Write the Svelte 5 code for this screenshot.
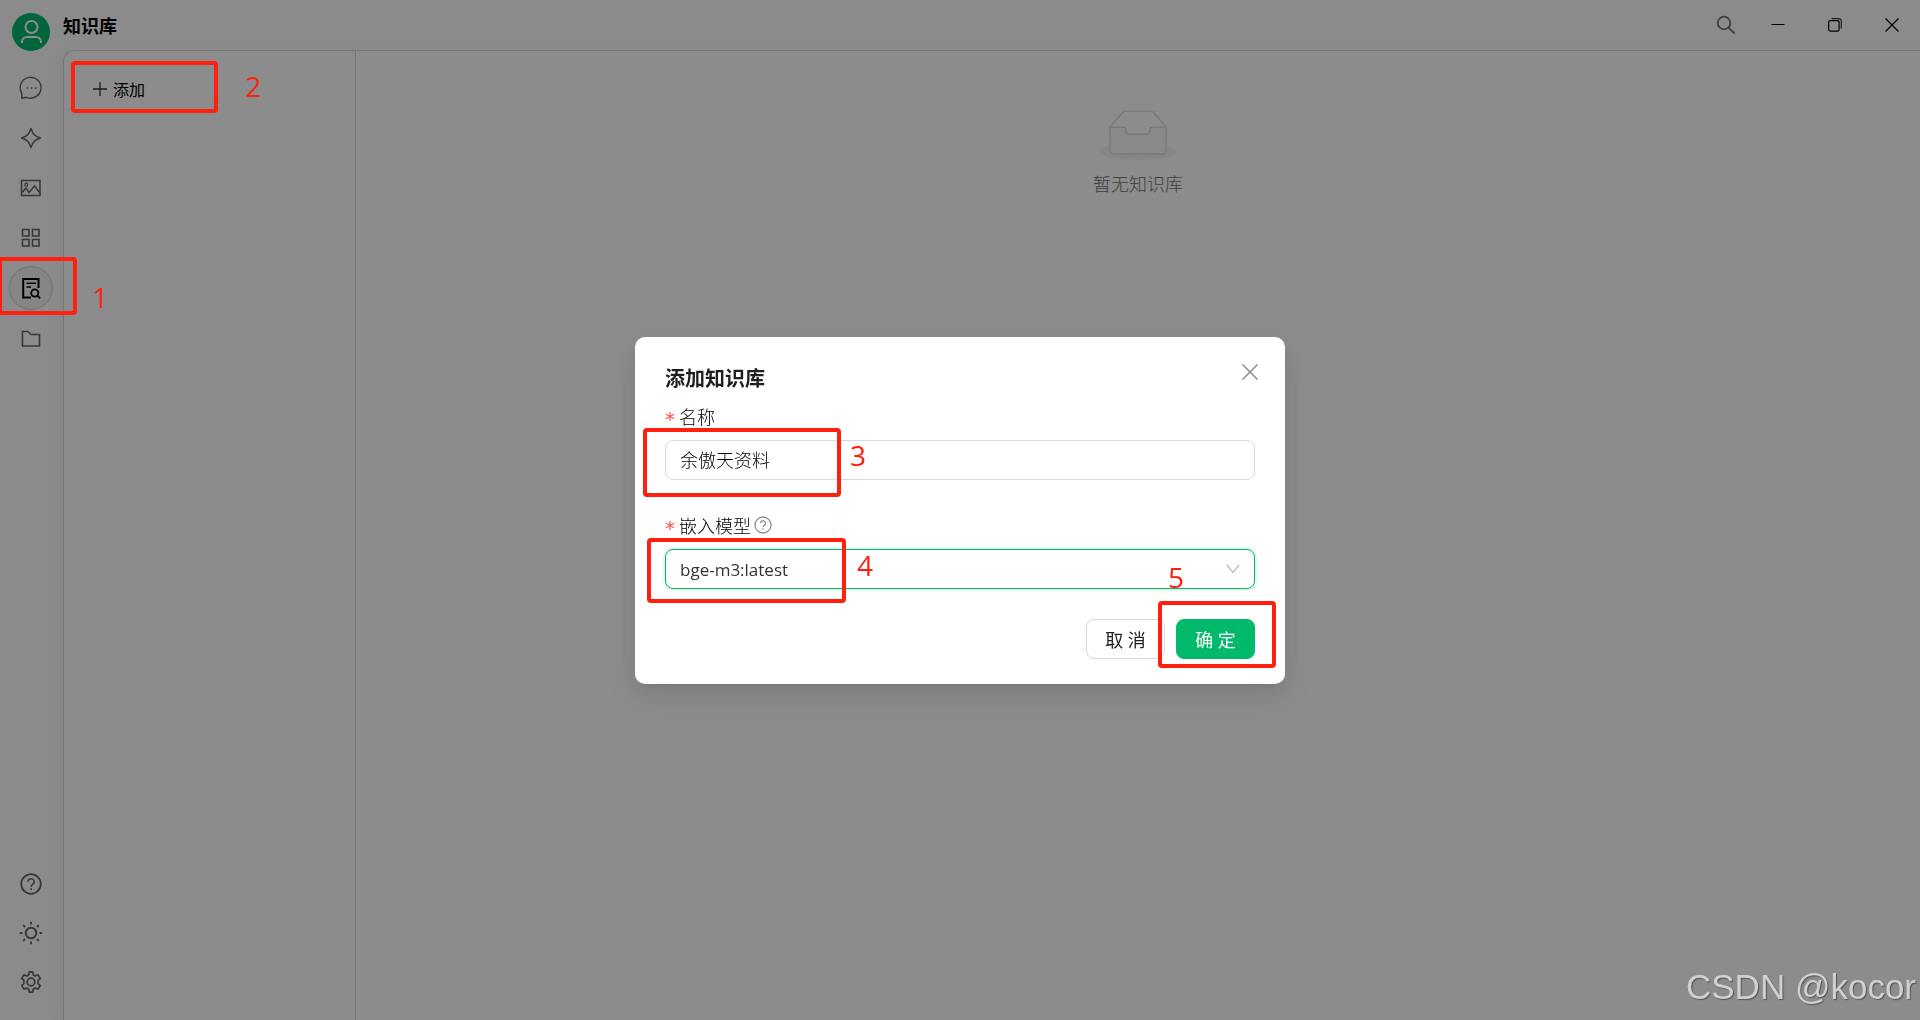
<script>
  let name = $state('余傲天资料');
  let model = $state('bge-m3:latest');
</script>

<div class="app">
  <aside class="sidebar">
    <button class="avatar" aria-label="用户">
      <svg width="38" height="38" viewBox="0 0 38 38" fill="none" stroke="#fff" stroke-width="2">
        <circle cx="19.500" cy="14" r="6" />
        <path d="M10 30v-1.500a5 5 0 0 1 5-4.500h9a5 5 0 0 1 5 4.500V30" />
      </svg>
    </button>
    <nav class="nav" aria-label="主导航">
      <button class="item" aria-label="对话">
        <svg viewBox="0 0 24 24">
          <path d="M2.800 22.300V17.300A10.400 10.400 0 1 1 7.500 21.300z" stroke-width="1.400" stroke-linejoin="round" />
          <path d="M7.500 12h1.600M11.700 12h1.600M15.900 12h1.600" stroke-width="1.500" />
        </svg>
      </button>
      <button class="item" aria-label="助手">
        <svg viewBox="0 0 24 24">
          <path d="M12 2.500c1.800 5.600 3.900 7.700 9.500 9.500-5.600 1.800-7.700 3.900-9.500 9.500-1.800-5.600-3.900-7.700-9.500-9.500 5.600-1.800 7.700-3.900 9.500-9.500z" stroke-width="1.500" stroke-linejoin="round" />
        </svg>
      </button>
      <button class="item" aria-label="图片">
        <svg viewBox="0 0 24 24">
          <rect x="2.500" y="4.500" width="18.500" height="15" stroke-width="1.500" />
          <circle cx="7.200" cy="8.700" r="1.500" stroke-width="1.200" />
          <path d="M3 16.500l4-4.500 3 4.500 5.500-6.500 5.500 7" stroke-width="1.500" />
        </svg>
      </button>
      <button class="item" aria-label="应用">
        <svg viewBox="0 0 24 24">
          <path d="M3.500 3.500h6.500V10H3.500zM13.500 3.500H20V10h-6.500zM3.500 13.500h6.500V20H3.500zM13.500 13.500H20V20h-6.500z" stroke-width="1.600" />
        </svg>
      </button>
      <button class="item active" aria-label="知识库" aria-current="page">
        <svg viewBox="0 0 24 24">
          <path d="M12 21.500H4.200V3h15.300v9" stroke-width="2" />
          <path d="M7.500 7.200h9.500M7.500 11h4.500" stroke-width="1.500" />
          <circle cx="15.800" cy="17" r="3.600" stroke-width="1.800" />
          <path d="M18.400 19.600l2.800 2.800" stroke-width="1.800" />
        </svg>
      </button>
      <button class="item" aria-label="文件">
        <svg viewBox="0 0 24 24">
          <path d="M3.500 5.500h5.300l3.200 3h8.500V20h-17z" stroke-width="1.600" />
        </svg>
      </button>
    </nav>
    <div class="tools">
      <button class="item" aria-label="帮助">
        <svg viewBox="0 0 24 24">
          <circle cx="12" cy="12" r="9.800" stroke-width="1.800" />
          <path d="M8.800 9.800a3.200 3 0 1 1 4.900 2.500c-1.100.700-1.700 1.200-1.700 2.400M12 16.300v1.700" stroke-width="1.600" />
        </svg>
      </button>
      <button class="item" aria-label="主题">
        <svg viewBox="0 0 24 24">
          <circle cx="12" cy="12" r="5.300" stroke-width="2" />
          <path d="M12 .800v2.700M12 20.500v2.700M.800 12h2.700M20.500 12h2.700M4.200 4.200l1.800 1.800M18 18l1.800 1.800M4.200 19.800L6 18M18 6l1.800-1.800" stroke-width="1.900" />
        </svg>
      </button>
      <button class="item" aria-label="设置">
        <svg viewBox="0 0 24 24">
          <circle cx="12" cy="12" r="3.800" stroke-width="1.700" />
          <path d="M10.300 1.800h3.400l.500 3 2 1.200 2.900-1.100 2.200 3.500-2.200 1.900v3.400l2.200 1.900-2.200 3.500-2.900-1.100-2 1.200-.500 3h-3.400l-.500-3-2-1.200-2.900 1.100-2.200-3.500 2.200-1.900v-3.400L2.700 8.400l2.200-3.500L7.800 6l2-1.200z" stroke-width="1.700" stroke-linejoin="round" />
        </svg>
      </button>
    </div>
  </aside>

  <div class="main">
    <header class="topbar">
      <h1>知识库</h1>
      <button class="search" aria-label="搜索">
        <svg width="20" height="20" viewBox="0 0 20 20" fill="none" stroke="#737373" stroke-width="1.800">
          <circle cx="8" cy="8" r="6.300" /><path d="M12.600 12.600l6 6" />
        </svg>
      </button>
      <button class="win" aria-label="最小化">
        <svg width="14" height="14" viewBox="0 0 14 14" stroke="#000"><path d="M.500 6.500h13" /></svg>
      </button>
      <button class="win" aria-label="还原">
        <svg width="14" height="14" viewBox="0 0 14 14" fill="none" stroke="#000" stroke-width="1.200">
          <rect x=".700" y="2.700" width="10.400" height="10.400" rx="1.500" />
          <path d="M3.500.700h7.300a2.500 2.500 0 0 1 2.500 2.500v7.300" stroke="#333" />
        </svg>
      </button>
      <button class="win" aria-label="关闭">
        <svg width="14" height="14" viewBox="0 0 14 14" stroke="#000" stroke-width="1.200"><path d="M.500.500l13 13M13.500.500l-13 13" /></svg>
      </button>
    </header>
    <div class="content">
      <section class="list">
        <button class="add">
          <svg width="16" height="16" viewBox="0 0 16 16" stroke="#333" stroke-width="1.300"><path d="M8 1v14M1 8h14" /></svg>
          添加
        </button>
      </section>
      <main class="empty">
        <svg width="78" height="50" viewBox="0 0 64 41">
          <g transform="translate(0 1)" fill="none">
            <ellipse fill="#f5f5f5" cx="32" cy="33" rx="32" ry="7" />
            <g stroke="#d9d9d9">
              <path d="M55 12.760L44.854 1.258C44.367.474 43.656 0 42.907 0H21.093c-.749 0-1.460.474-1.947 1.257L9 12.761V22h46v-9.240z" />
              <path fill="#fafafa" d="M41.613 15.931c0-1.605.994-2.930 2.227-2.931H55v18.137C55 33.260 53.680 35 52.050 35h-40.100C10.320 35 9 33.259 9 31.137V13h11.160c1.233 0 2.227 1.323 2.227 2.928v.022c0 1.605 1.005 2.901 2.237 2.901h14.752c1.232 0 2.237-1.308 2.237-2.913v-.007z" />
            </g>
          </g>
        </svg>
        <p>暂无知识库</p>
      </main>
    </div>
  </div>
</div>

<div class="mask">
  <form class="modal" aria-labelledby="dialog-title" onsubmit={(e) => e.preventDefault()}>
    <button type="button" class="close" aria-label="关闭对话框">
      <svg width="16" height="16" viewBox="0 0 16 16" stroke="#8c8c8c" stroke-width="1.500"><path d="M.500.500l15 15M15.500.500l-15 15" /></svg>
    </button>
    <h2 id="dialog-title">添加知识库</h2>
    <div class="field">
      <label for="kb-name"><span class="star">*</span>名称</label>
      <input id="kb-name" type="text" bind:value={name} />
    </div>
    <div class="field">
      <label for="kb-model">
        <span class="star">*</span>嵌入模型
        <svg class="hint" width="18" height="18" viewBox="0 0 18 18" fill="none" stroke="#8c8c8c" stroke-width="1.300">
          <circle cx="9" cy="9" r="8" />
          <path d="M6.500 7.300a2.500 2.300 0 1 1 3.700 2c-.800.500-1.200.900-1.200 1.800M9 12.200v1.400" />
        </svg>
      </label>
      <div class="picker">
        <select id="kb-model" bind:value={model}>
          <option>bge-m3:latest</option>
        </select>
        <svg class="arrow" width="14" height="10" viewBox="0 0 14 10" fill="none" stroke="#bfbfbf" stroke-width="1.400"><path d="M1 1l6 7.500L13 1" /></svg>
      </div>
    </div>
    <footer>
      <button type="button" class="btn">取 消</button>
      <button type="submit" class="btn primary">确 定</button>
    </footer>

    <span class="frame frame-name"></span><span class="step step-name">3</span>
    <span class="frame frame-model"></span><span class="step step-model">4</span>
    <span class="frame frame-ok"></span><span class="step step-ok">5</span>
  </form>
</div>

<span class="frame frame-nav"></span><span class="step step-nav">1</span>
<span class="frame frame-add"></span><span class="step step-add">2</span>
<div class="watermark">CSDN @kocor</div>

<style>
  :global(body) {
    overflow: hidden;
    background: #fff;
    font-family: "Open Sans", "Noto Sans CJK SC", sans-serif;
    font-size: 18px;
    color: #000;
  }
  :global(#app) { position: relative; }
  button, input, select { font: inherit; color: inherit; box-sizing: border-box; }
  button { border: 0; padding: 0; background: none; display: flex; align-items: center; justify-content: center; }
  h1, h2, p { margin: 0; }
  svg { flex: none; }

  .app { display: flex; height: 100vh; background: #fdfdfd; }
  .sidebar {
    width: 63px;
    box-sizing: border-box;
    padding: 13px 1px 16px 0;
    display: flex;
    flex-direction: column;
    align-items: center;
  }
  .avatar { width: 38px; height: 38px; border-radius: 50%; background: #00b96b; }
  .nav { display: flex; flex-direction: column; gap: 6px; margin-top: 15px; }
  .tools { display: flex; flex-direction: column; gap: 5px; margin-top: auto; }
  .item { width: 44px; height: 44px; border-radius: 50%; border: 1px solid transparent; }
  .item svg { width: 24px; height: 24px; fill: none; stroke: #666; }
  .active { border-color: #cfcfcf; background: #f3f3f3; }
  .active svg { stroke: #000; }

  .main { flex: 1; display: flex; flex-direction: column; }
  .topbar { height: 50px; display: flex; align-items: center; }
  h1 { flex: 1; padding-top: 2px; font-size: 18px; line-height: 28px; font-weight: 700; }
  .search { width: 46px; height: 50px; }
  .win { width: 57px; height: 50px; }
  .content {
    flex: 1;
    display: flex;
    border-top: 1px solid #d9d9d9;
    border-left: 1px solid #d9d9d9;
    border-top-left-radius: 12px;
    background: #fff;
    box-shadow: -4px 0 16px rgba(0, 0, 0, 0.04);
  }
  .list { width: 292px; box-sizing: border-box; padding: 16px 8px; border-right: 1px solid #d9d9d9; }
  .add { width: 100%; height: 44px; padding-left: 20px; justify-content: flex-start; gap: 5px; font-size: 16px; }
  .empty { flex: 1; display: flex; flex-direction: column; align-items: center; gap: 10px; padding-top: 59px; }
  .empty p { line-height: 28px; color: #737373; font-weight: 300; }

  .mask {
    position: fixed;
    inset: 0;
    padding-top: 1px;
    display: flex;
    align-items: center;
    justify-content: center;
    background: rgba(0, 0, 0, 0.45);
  }
  .modal {
    position: relative;
    width: 650px;
    box-sizing: border-box;
    padding: 27px 30px 25px;
    border-radius: 10px;
    background: #fff;
    color: #1f1f1f;
    box-shadow: 0 8px 20px rgba(0, 0, 0, 0.08), 0 4px 8px -5px rgba(0, 0, 0, 0.12), 0 12px 36px 10px rgba(0, 0, 0, 0.05);
  }
  .close { position: absolute; top: 20px; right: 20px; width: 30px; height: 30px; }
  h2 { margin-bottom: 8px; font-size: 20px; line-height: 30px; font-weight: 700; }
  .field { display: flex; flex-direction: column; gap: 10px; }
  .field + .field { margin-top: 31px; }
  label { display: flex; align-items: center; height: 28px; font-weight: 300; color: #000; }
  .star { width: 14px; padding-top: 6px; color: #ff4d4f; font-family: "DejaVu Sans", sans-serif; font-size: 20px; font-weight: 400; line-height: 22px; }
  .hint { margin-left: 3px; }
  input, select {
    width: 100%;
    height: 40px;
    padding: 0 14px;
    border: 1px solid #d9d9d9;
    border-radius: 8px;
    background: #fff;
    outline: none;
  }
  input { padding-bottom: 2px; font-weight: 300; color: #000; }
  .picker { display: grid; align-items: center; }
  .picker > * { grid-area: 1 / 1; }
  select {
    appearance: none;
    border-color: #00b96b;
    box-shadow: 0 0 0 2px rgba(5, 185, 105, 0.12);
    font-size: 17px;
    color: #333;
  }
  .arrow { justify-self: end; margin-right: 15px; pointer-events: none; }
  footer { display: flex; justify-content: flex-end; gap: 11px; margin-top: 30px; }
  .btn { width: 79px; height: 40px; border: 1px solid #d9d9d9; border-radius: 8px; background: #fff; }
  .primary { border-color: #00b96b; background: #00b96b; color: #fff; }

  .frame { position: absolute; box-sizing: border-box; border: 4px solid #ff2010; border-radius: 4px; pointer-events: none; }
  .step { position: absolute; font-size: 28px; line-height: 28px; color: #ff2010; }
  .frame-nav { left: -2px; top: 257px; width: 79px; height: 58px; }
  .step-nav { left: 92px; top: 283px; }
  .frame-add { left: 71px; top: 61px; width: 147px; height: 52px; }
  .step-add { left: 245px; top: 72px; }
  .frame-name { left: 8px; top: 91px; width: 198px; height: 69px; }
  .step-name { left: 215px; top: 104px; }
  .frame-model { left: 12px; top: 201px; width: 199px; height: 65px; }
  .step-model { left: 222px; top: 214px; }
  .frame-ok { left: 523px; top: 264px; width: 118px; height: 67px; }
  .step-ok { left: 533px; top: 226px; }
  .watermark {
    position: absolute;
    right: 4px;
    bottom: 13px;
    font-family: "Liberation Sans", sans-serif;
    font-size: 35px;
    line-height: 40px;
    color: #d0d0d0;
    text-shadow: 1px 1px 1px #555;
  }
</style>
